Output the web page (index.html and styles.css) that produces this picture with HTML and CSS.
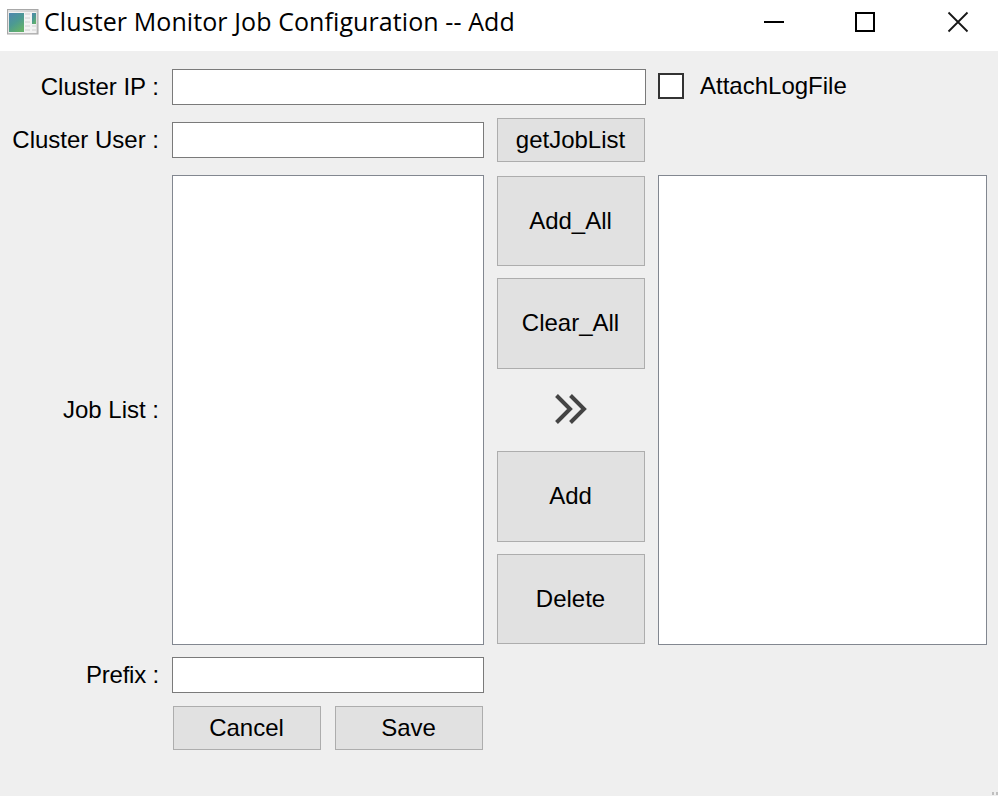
FILE: index.html
```html
<!DOCTYPE html>
<html lang="en">
<head>
<meta charset="utf-8">
<title>Cluster Monitor Job Configuration -- Add</title>
<link rel="stylesheet" href="styles.css">
</head>
<body>
<div class="window">
  <header class="titlebar">
    <svg class="app-icon" width="32" height="26" viewBox="0 0 32 26">
      <defs>
        <linearGradient id="frame" x1="0" y1="0" x2="1" y2="1"><stop offset="0" stop-color="#e2e2e2"/><stop offset="1" stop-color="#bdbdbd"/></linearGradient>
        <linearGradient id="pane" x1="0" y1="0" x2=".6" y2="1"><stop offset="0" stop-color="#4f86b0"/><stop offset=".55" stop-color="#4c9a92"/><stop offset="1" stop-color="#63b06c"/></linearGradient>
      </defs>
      <rect x=".5" y=".5" width="30.5" height="24.5" fill="url(#frame)" stroke="#a8a8a8"/>
      <rect x="1.5" y="3" width="28" height="21" fill="#f3f3f3"/>
      <rect x="2" y="4" width="15" height="19" fill="url(#pane)"/>
      <path d="M18 5h5M18 9h5M18 13h5M18 17h5M18 21h5M25 17h4M25 21h4" stroke="#d0d0d0"/>
      <rect x="25" y="4" width="4" height="11" fill="url(#pane)"/>
    </svg>
    <h1 class="title">Cluster Monitor Job Configuration -- Add</h1>
    <svg class="controls" width="206" height="22" viewBox="0 0 206 22" fill="none" stroke="#000" stroke-width="2">
      <path d="M1 11h20"/>
      <rect x="93" y="2" width="18" height="18"/>
      <path d="M185.500 1.500l19 19M204.500 1.500l-19 19" stroke="#161616" stroke-width="1.800"/>
    </svg>
  </header>
  <main class="form">
    <label class="label" for="ip">Cluster IP :</label>
    <input class="field wide" id="ip" type="text">
    <label class="check"><input class="box" type="checkbox">AttachLogFile</label>

    <label class="label" for="user">Cluster User :</label>
    <input class="field" id="user" type="text">
    <button class="button">getJobList</button>

    <span class="label first">Job List :</span>
    <div class="list"></div>
    <div class="actions">
      <button class="button tall">Add_All</button>
      <button class="button taller">Clear_All</button>
      <svg class="arrow" width="148" height="58" viewBox="0 0 148 58" fill="none" stroke="#444" stroke-width="4">
        <path d="M59.500 14.500L73 28L59.500 41.500M73.500 14.500L87 28L73.500 41.500"/>
      </svg>
      <button class="button taller">Add</button>
      <button class="button tall">Delete</button>
    </div>
    <div class="list"></div>

    <label class="label first prefix" for="prefix">Prefix :</label>
    <input class="field" id="prefix" type="text">

    <div class="footer">
      <button class="button">Cancel</button>
      <button class="button">Save</button>
    </div>
  </main>
  <svg class="grip" width="6" height="4" viewBox="0 0 6 4"><path d="M0 0h2v3H0zM4 0h2v3H4z" fill="#bfbfbf"/></svg>
</div>
</body>
</html>
```
FILE: styles.css
```css
* { box-sizing: border-box; }

body {
  margin: 0;
  font: 24px/28px "Liberation Sans", Arial, sans-serif;
  color: #000;
}

.window {
  position: relative;
  width: 998px;
  height: 796px;
  overflow: hidden;
  background: #efefef;
}

.titlebar {
  display: flex;
  align-items: center;
  height: 51px;
  padding: 0 29px 7px 7px;
  background: #fff;
}

.title {
  margin: 0 0 2px 5px;
  font: 400 25px/36px "Open Sans", "Noto Sans", sans-serif;
  letter-spacing: 0.09px;
  white-space: nowrap;
}

.controls { margin-left: auto; }

.form {
  display: grid;
  grid-template-columns: 147px 312px 148px 329px;
  grid-template-rows: 36px 44px 469px 36px 44px;
  gap: 13px;
  align-items: center;
  padding: 18px 11px 0 12px;
}

.label {
  text-align: right;
  white-space: nowrap;
}

.first { grid-column: 1; }

.prefix { letter-spacing: -0.2px; }

.field {
  width: 100%;
  height: 36px;
  margin: 0;
  padding: 0 6px;
  border: 1px solid #7a7a7a;
  border-radius: 0;
  background: #fff;
  font: inherit;
}

.wide {
  grid-column: 2 / 4;
  width: 474px;
}

.check {
  display: flex;
  align-items: center;
  gap: 16px;
  height: 34px;
  align-self: start;
}

.box {
  appearance: none;
  width: 26px;
  height: 26px;
  margin: 0;
  border: 2px solid #333;
  background: #fff;
}

.button {
  width: 148px;
  height: 44px;
  margin: 0;
  padding: 0 1px 0 0;
  border: 1px solid #adadad;
  border-radius: 0;
  background: #e1e1e1;
  color: #000;
  font: inherit;
}

.list {
  align-self: start;
  height: 470px;
  border: 1px solid #828790;
  background: #fff;
}

.actions {
  display: flex;
  flex-direction: column;
  gap: 12px;
  align-self: start;
  padding-top: 1px;
}

.tall { height: 90px; }

.taller {
  height: 91px;
  padding-bottom: 1px;
}

.footer {
  display: flex;
  grid-column: 2 / 4;
  grid-row: 5;
  gap: 14px;
  padding-left: 1px;
}

.grip {
  position: absolute;
  right: 0;
  bottom: 0;
}
```
